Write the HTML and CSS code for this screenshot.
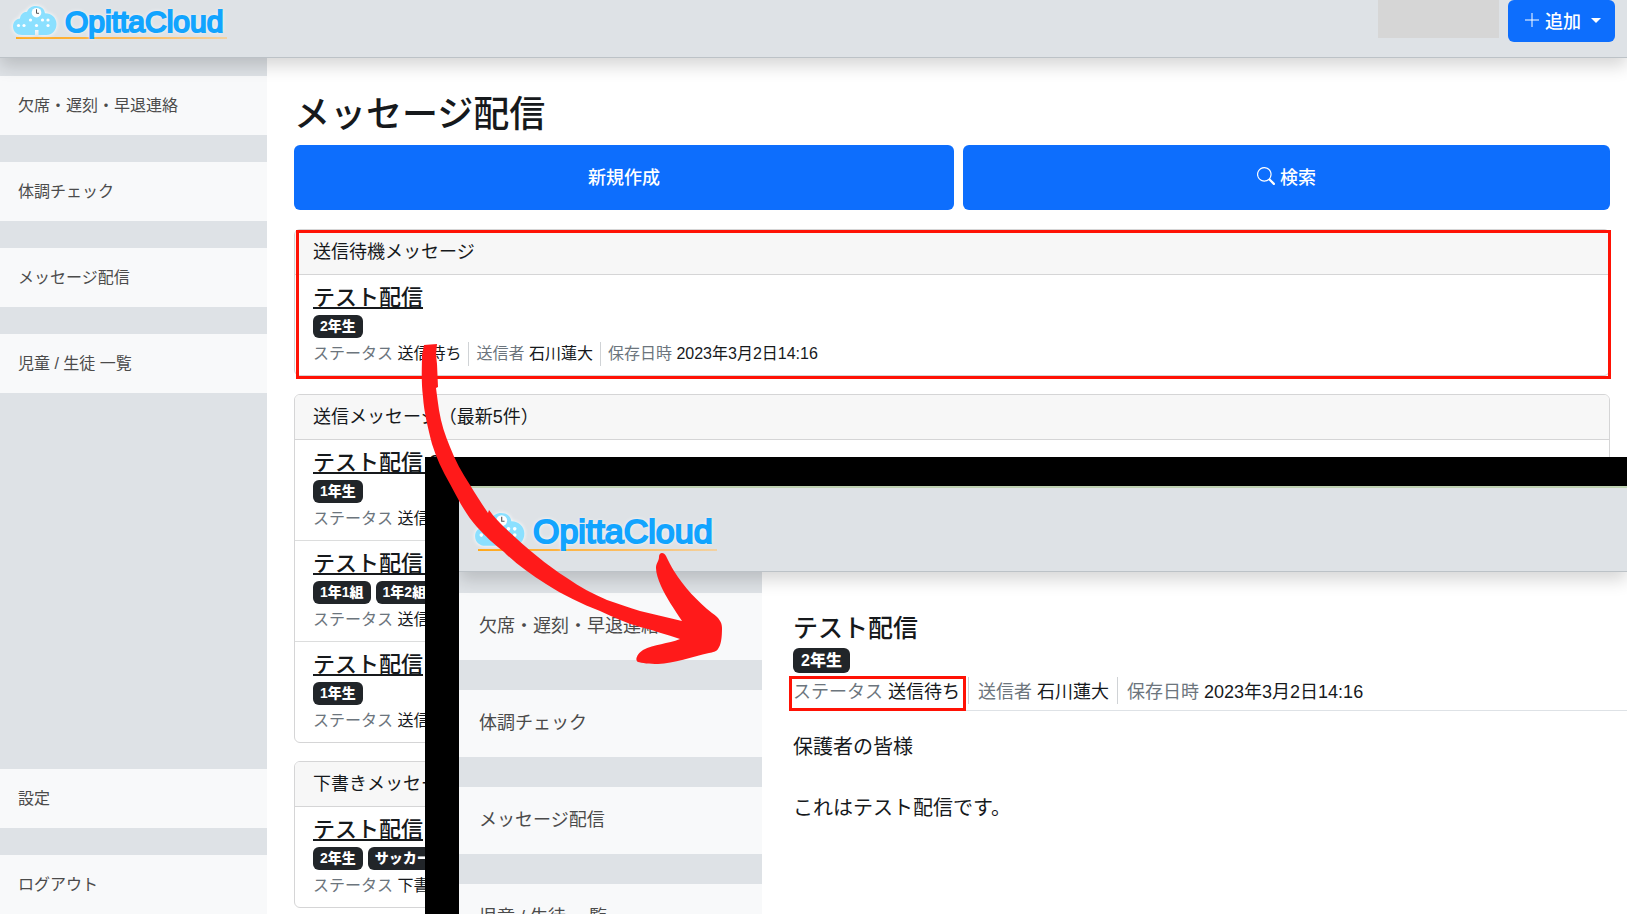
FILE: index.html
```html
<!DOCTYPE html>
<html lang="ja">
<head>
<meta charset="utf-8">
<title>メッセージ配信 | OpittaCloud</title>
<link rel="stylesheet" href="styles.css">
</head>
<body>
<svg class="defs" aria-hidden="true">
  <symbol id="cloud" viewBox="0 0 44 30">
    <path fill="#8be0ff" d="M9 29C4 29 0 25.500 0 20.500C0 16 3 13 7 12.500C7.500 8.500 10 6 14 5.800C15.500 2 19 0 23 0C28 0 31.500 3 32 7.200C38 7 43.500 11.500 43.500 18C43.500 24.500 39 29 33.500 29H25.500V24H22V29Z"/>
    <circle cx="23.500" cy="6.700" r="4.800" fill="#fff"/>
    <path d="M23.500 3.300V7.300H26" fill="none" stroke="#555" stroke-width="1"/>
    <g fill="#fff"><circle cx="5.500" cy="19.500" r="1.600"/><circle cx="11" cy="19.500" r="1.600"/><circle cx="17.500" cy="14" r="1.600"/><circle cx="23.500" cy="19.500" r="1.600"/><circle cx="29.500" cy="14" r="1.600"/><circle cx="35" cy="14" r="1.600"/><circle cx="35" cy="19.500" r="1.600"/></g>
  </symbol>
</svg>
<div class="app">
  <header class="bar">
    <a class="logo" href="#"><svg class="logo-cloud"><use href="#cloud"/></svg><span>OpittaCloud</span></a>
    <div class="bar-tools">
      <div class="account"></div>
      <button class="add" type="button"><svg class="plus" viewBox="0 0 14 14"><path d="M7 0V14M0 7H14"/></svg>追加<svg class="caret" viewBox="0 0 10 5"><path d="M0 0H10L5 5Z"/></svg></button>
    </div>
  </header>
  <div class="body">
    <nav class="side">
      <a href="#">欠席・遅刻・早退連絡</a>
      <a href="#">体調チェック</a>
      <a href="#">メッセージ配信</a>
      <a href="#">児童 / 生徒 一覧</a>
      <a class="side-end" href="#">設定</a>
      <a href="#">ログアウト</a>
    </nav>
    <main class="main">
      <h1>メッセージ配信</h1>
      <div class="actions">
        <button type="button">新規作成</button>
        <button type="button"><svg class="search" viewBox="0 0 16 16"><path d="M11.742 10.344a6.500 6.500 0 1 0-1.397 1.398h-.001q.044.060.098.115l3.850 3.850a1 1 0 0 0 1.415-1.414l-3.850-3.850a1 1 0 0 0-.115-.100zM12 6.500a5.500 5.500 0 1 1-11 0 5.500 5.500 0 0 1 11 0"/></svg>検索</button>
      </div>
      <section class="card marked">
        <h2>送信待機メッセージ</h2>
        <article>
          <a class="title" href="#">テスト配信</a>
          <div class="badges"><span>2年生</span></div>
          <ul class="meta"><li><i>ステータス</i> 送信待ち</li><li><i>送信者</i> 石川蓮大</li><li><i>保存日時</i> 2023年3月2日14:16</li></ul>
        </article>
      </section>
      <section class="card">
        <h2>送信メッセージ（最新5件）</h2>
        <article>
          <a class="title" href="#">テスト配信 2</a>
          <div class="badges"><span>1年生</span></div>
          <ul class="meta"><li><i>ステータス</i> 送信</li></ul>
        </article>
        <article>
          <a class="title" href="#">テスト配信&nbsp;</a>
          <div class="badges"><span>1年1組</span><span>1年2組</span></div>
          <ul class="meta"><li><i>ステータス</i> 送信</li></ul>
        </article>
        <article>
          <a class="title" href="#">テスト配信</a>
          <div class="badges"><span>1年生</span></div>
          <ul class="meta"><li><i>ステータス</i> 送信</li></ul>
        </article>
      </section>
      <section class="card">
        <h2>下書きメッセージ</h2>
        <article>
          <a class="title" href="#">テスト配信</a>
          <div class="badges"><span>2年生</span><span>サッカー</span></div>
          <ul class="meta"><li><i>ステータス</i> 下書き</li></ul>
        </article>
      </section>
    </main>
  </div>

  <div class="window">
    <div class="screen">
      <header class="bar">
        <a class="logo" href="#"><svg class="logo-cloud"><use href="#cloud"/></svg><span>OpittaCloud</span></a>
      </header>
      <div class="body">
        <nav class="side">
          <a href="#">欠席・遅刻・早退連絡</a>
          <a href="#">体調チェック</a>
          <a href="#">メッセージ配信</a>
          <a href="#">児童 / 生徒 一覧</a>
        </nav>
        <main class="detail">
          <h2>テスト配信</h2>
          <div class="badges"><span>2年生</span></div>
          <ul class="meta"><li class="marked"><i>ステータス</i> 送信待ち</li><li><i>送信者</i> 石川蓮大</li><li><i>保存日時</i> 2023年3月2日14:16</li></ul>
          <p>保護者の皆様</p>
          <p>これはテスト配信です。</p>
        </main>
      </div>
    </div>
  </div>

  <svg class="arrow" viewBox="0 0 302 322" aria-hidden="true">
    <path d="M4 2L17 1L16 12L17 21L18 44L16 45C17 53 18 60 19 67C21 80 25 92 30 104C35 117 42 130 50 142C56 152 62 161 68 170L69 167C74 174 79 179 84 184C104 203 125 221 147 235C160 244 173 251 187 257C198 261 208 264 220 268L262 278C254 266 246 254 241 243C238 236 236 230 236 225C236 220 239 218 239 214C239 209 244 209 246 213C249 219 251 223 254 228C264 244 278 259 292 270C299 275 302 279 302 285C302 295 301 302 298 306C296 309 293 309 289 310C272 314 254 320 238 321C230 321 221 320 218 319C214 317 218 310 223 307C234 301 248 301 260 296C247 292 233 287 220 284C206 280 193 274 180 268C162 261 143 252 126 241C110 231 96 221 84 209C74 201 65 193 57 184C46 172 38 156 30 141C22 127 16 114 12 101C8 85 4 69 3 54C1 38 2 24 2 12Z"/>
  </svg>
</div>
</body>
</html>
```

FILE: styles.css
```css
* { box-sizing: border-box; }

body {
  margin: 0;
  font-family: "Liberation Sans", "Noto Sans CJK JP", sans-serif;
  font-size: 18px;
  color: #16191c;
  background: #fff;
}

h1, h2, p, ul { margin: 0; padding: 0; }
a { color: inherit; text-decoration: none; }
button { font: inherit; border: 0; cursor: pointer; }
i { font-style: normal; color: #6c757d; }
.defs { position: absolute; width: 0; height: 0; }

.app {
  position: relative;
  display: flex;
  flex-direction: column;
  height: 100vh;
  overflow: hidden;
}

/* Top bar */
.bar {
  position: relative;
  z-index: 1;
  display: flex;
  justify-content: space-between;
  align-items: flex-start;
  height: 58px;
  flex: none;
  padding: 0 12px 0 13px;
  background: #dee2e6;
  border-bottom: 1px solid #bcc2c7;
  box-shadow: 0 8px 16px rgba(0, 0, 0, .16);
}

.logo {
  display: flex;
  align-items: flex-start;
  gap: 8px;
  margin-top: 6px;
  padding: 0 4px 0 0;
  height: 33px;
  font-size: 30px;
  line-height: 32px;
  color: #12a4ff;
  -webkit-text-stroke: 2px #12a4ff;
  text-shadow: 0 0 3px #fff, 0 0 5px #fff;
  background: linear-gradient(90deg, #ffa81a, #fbbd62 60%, #f2d2a4) 3px 100% / 100% 2px no-repeat;
}

.logo-cloud { width: 44px; height: 30px; filter: drop-shadow(0 0 2px #fff); }

.bar-tools { display: flex; gap: 9px; }
.account { width: 121px; height: 38px; background: #d6d6d6; }

.add {
  display: flex;
  align-items: center;
  height: 42px;
  padding: 0 14px 2px 17px;
  font-weight: 500;
  color: #fff;
  background: #0d6efd;
  border-radius: 6px;
}

.plus { width: 14px; height: 14px; margin-right: 6px; fill: none; stroke: #fff; }
.caret { width: 10px; height: 5px; margin-left: 10px; fill: #fff; }

/* Columns */
.body { display: flex; flex: 1; min-height: 0; }

.side {
  display: flex;
  flex-direction: column;
  gap: 27px;
  flex: none;
  width: 267px;
  padding-top: 18px;
  background: #dee2e6;
}

.side a {
  flex: none;
  padding: 0 18px;
  font-size: 16px;
  line-height: 59px;
  color: #4b4b4b;
  background: #f8f9fa;
}

.side .side-end { margin-top: auto; }

.main { flex: 1; min-width: 0; padding: 36px 17px 0 27px; }

h1 {
  margin-bottom: 9px;
  font-size: 36px;
  font-weight: 500;
  line-height: 42px;
}

.actions {
  display: grid;
  grid-template-columns: 660fr 647fr;
  gap: 9px;
  margin-bottom: 19px;
}

.actions button {
  display: flex;
  align-items: center;
  justify-content: center;
  gap: 5px;
  height: 65px;
  padding-bottom: 4px;
  font-weight: 500;
  color: #fff;
  background: #0d6efd;
  border-radius: 6px;
}

.search { width: 18px; height: 18px; fill: #fff; }

/* Message cards */
.card {
  position: relative;
  margin-bottom: 18px;
  border: 1px solid #d5d5d6;
  border-radius: 6px;
}

.card h2 {
  padding: 0 18px;
  font-size: 18px;
  font-weight: 400;
  line-height: 44px;
  background: #f7f7f7;
  border-bottom: 1px solid #d5d5d6;
  border-radius: 5px 5px 0 0;
}

.card.marked::after {
  content: "";
  position: absolute;
  inset: 0 -2px -4px 1px;
  border: 3px solid #ff1205;
}

article { padding: 8px 18px 9px; }
article + article { border-top: 1px solid #dcdddd; }

.title {
  display: block;
  font-size: 22px;
  font-weight: 500;
  line-height: 30px;
  text-decoration: underline 2px;
  text-underline-offset: 2px;
  text-decoration-skip-ink: none;
}

.badges { display: flex; gap: 5px; margin: 2px 0 4px; }

.badges span {
  padding: 0 7px;
  font-size: 14px;
  font-weight: 900;
  line-height: 23px;
  color: #fff;
  background: #212529;
  border-radius: 6px;
}

.meta {
  display: flex;
  font-size: 16px;
  line-height: 24px;
  list-style: none;
  white-space: nowrap;
}

.meta li + li { margin-left: 7px; padding-left: 7px; border-left: 1px solid #d0d3d6; }

/* Overlapping window with the opened message */
.window {
  position: absolute;
  z-index: 2;
  inset: 457px 0 0 425px;
  padding: 29px 0 0 34px;
  background: #000;
  overflow: hidden;
}

.screen {
  display: flex;
  flex-direction: column;
  height: 100%;
  background: #fff;
  border-top: 2px solid #c3d6b6;
}

.screen .bar { height: 84px; padding-left: 16px; }

.screen .logo {
  margin-top: 25px;
  height: 38px;
  font-size: 34px;
  line-height: 36px;
}

.screen .logo-cloud { width: 50px; height: 34px; }

.screen .side { gap: 30px; width: 303px; padding-top: 21px; }
.screen .side a { padding: 0 20px; font-size: 18px; line-height: 67px; }

.detail { flex: 1; min-width: 0; padding: 41px 0 0 31px; }
.detail h2 { font-size: 25px; font-weight: 500; line-height: 30px; }
.detail .badges { margin: 5px 0 4px; }
.detail .badges span { padding: 0 8px; font-size: 16px; line-height: 25px; }

.detail .meta {
  margin-bottom: 21px;
  padding-bottom: 6px;
  font-size: 18px;
  line-height: 23px;
  border-bottom: 1px solid #dee2e6;
}

.detail .meta li { position: relative; padding-top: 4px; }
.detail .meta li + li { margin-left: 8px; padding-left: 9px; }

.detail .marked::after {
  content: "";
  position: absolute;
  inset: -1px -6px -7px -4px;
  border: 3px solid #ff1205;
}

.detail p { margin-bottom: 31px; font-size: 20px; line-height: 30px; }

/* Hand-drawn arrow across both windows */
.arrow {
  position: absolute;
  z-index: 3;
  left: 420px;
  top: 343px;
  width: 302px;
  height: 322px;
  fill: #ff1a1a;
}
```
